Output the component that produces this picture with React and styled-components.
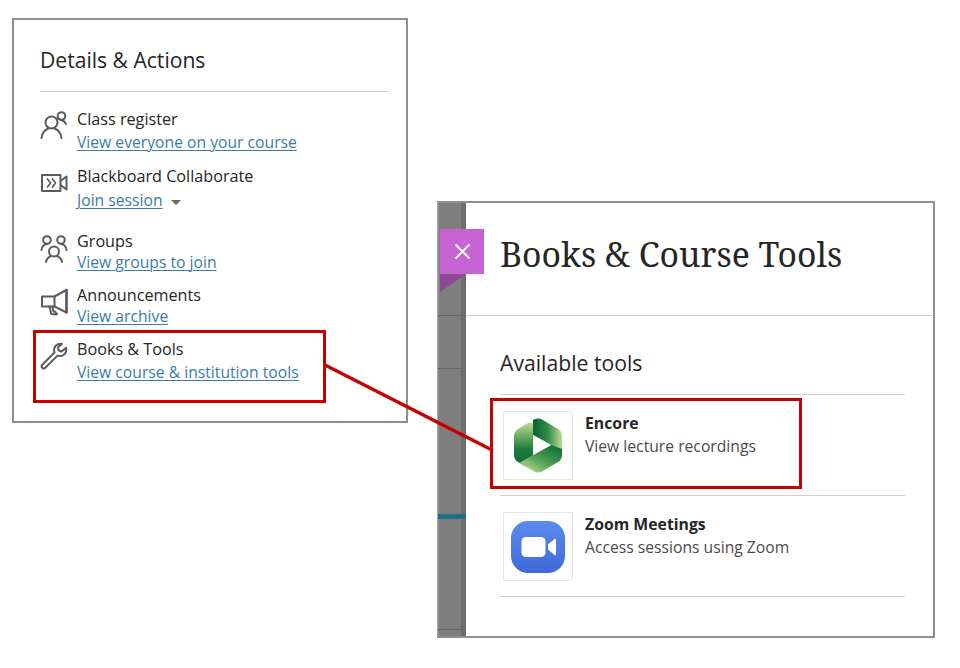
import React from "react";
import styled, { createGlobalStyle } from "styled-components";

const Global = createGlobalStyle`
  html, body { margin: 0; padding: 0; background: #fff; }
  body { font-family: "Open Sans", "Noto Sans", sans-serif; color: #262626; }
`;

const Page = styled.div`
  position: relative;
  width: 960px;
  height: 668px;
  overflow: hidden;
  display: flex;
  align-items: flex-start;
  padding: 18px 0 0 12px;
  box-sizing: border-box;
`;

const DetailsCard = styled.section`
  width: 396px;
  height: 405px;
  box-sizing: border-box;
  border: 2px solid #8f8f8f;
  padding: 25px 17px 0 26px;
  background: #fff;
  flex: none;
`;

const CardTitle = styled.h2`
  margin: 0;
  font-size: 21.1px;
  line-height: 30px;
  font-weight: 400;
  color: #262626;
  padding-bottom: 16px;
  border-bottom: 1px solid #cdcdcd;
`;

const RowList = styled.div`
  display: flex;
  flex-direction: column;
  padding-top: 15px;
`;

const Row = styled.div`
  position: relative;
  display: flex;
  align-items: flex-start;
  gap: 9px;
  height: ${(p) => p.$h}px;
`;

const RowIcon = styled.svg`
  width: 28px;
  height: 28px;
  flex: none;
  margin-top: ${(p) => p.$top}px;
  color: #5c5c5c;
`;

const RowText = styled.div`
  display: flex;
  flex-direction: column;
`;

const RowTitle = styled.div`
  font-size: 16.2px;
  line-height: 24px;
  color: #262626;
`;

const RowLink = styled.a`
  display: inline-block;
  font-size: 15.7px;
  line-height: ${(p) => p.$lh || 23}px;
  color: #3a7cab;
  text-decoration: underline;
  text-underline-offset: 2px;
  text-decoration-thickness: 1px;
`;

const Caret = styled.span`
  display: inline-block;
  width: 0;
  height: 0;
  margin-left: 8px;
  border-left: 5px solid transparent;
  border-right: 5px solid transparent;
  border-top: 5px solid #666;
  vertical-align: 1px;
`;

const Callout = styled.div`
  position: absolute;
  box-sizing: border-box;
  border: 3.5px solid #c80000;
  pointer-events: none;
`;

const RowCallout = styled(Callout)`
  left: -7px;
  top: -7px;
  width: 293px;
  height: 73px;
`;

const ToolsCard = styled.section`
  width: 498px;
  height: 437px;
  margin: 183px 0 0 29px;
  flex: none;
  box-sizing: border-box;
  border: 2px solid #8f8f8f;
  border-left: 1px solid #a8a8a8;
  display: flex;
  position: relative;
  background: #fff;
`;

const Backdrop = styled.div`
  position: relative;
  width: 28px;
  flex: none;
  background: linear-gradient(90deg, #8a8a8a 0, #7e7e7e 2px, #7e7e7e 23px, #6d6d6d 23px, #6d6d6d 28px);
`;

const BackdropRule = styled.div`
  position: absolute;
  left: 0;
  right: 0;
  top: ${(p) => p.$top}px;
  height: ${(p) => p.$h || 1}px;
  background: ${(p) => p.$color || "#666"};
`;

const CloseTile = styled.div`
  position: absolute;
  left: 2px;
  top: 26px;
  width: 44px;
  height: 45px;
  background: #c564d2;
  display: flex;
  align-items: center;
  justify-content: center;
`;

const Fold = styled.div`
  position: absolute;
  left: 2px;
  top: 71px;
  width: 0;
  height: 0;
  border-top: 18px solid #8d4995;
  border-right: 26px solid transparent;
`;

const Drawer = styled.div`
  flex: 1;
  display: flex;
  flex-direction: column;
  min-width: 0;
`;

const DrawerHeader = styled.header`
  height: 113px;
  box-sizing: border-box;
  padding: 28px 0 0 34px;
  border-bottom: 1px solid #cfcfcf;
`;

const DrawerTitle = styled.h1`
  margin: 0;
  font-family: "Noto Serif", "DejaVu Serif", serif;
  font-weight: 400;
  font-size: 33.8px;
  line-height: 46px;
  color: #262626;
`;

const DrawerBody = styled.div`
  padding: 30px 28px 0 34px;
`;

const SectionTitle = styled.h2`
  margin: 0;
  font-size: 21.2px;
  line-height: 33px;
  font-weight: 400;
  color: #262626;
  padding-bottom: 15px;
  border-bottom: 1px solid #cfcfcf;
`;

const ToolRow = styled.div`
  position: relative;
  border-bottom: 1px solid #cfcfcf;
  display: flex;
  align-items: flex-start;
  gap: 12px;
  padding: 16px 0 0 3px;
  height: 84px;
`;

const ToolTile = styled.div`
  width: 70px;
  height: 69px;
  box-sizing: border-box;
  border: 1px solid #e6e6e6;
  border-radius: 2px;
  display: flex;
  align-items: center;
  justify-content: center;
  flex: none;
`;

const ToolText = styled.div`
  display: flex;
  flex-direction: column;
  padding-top: 1px;
`;

const ToolName = styled.div`
  font-size: 15.8px;
  line-height: 22px;
  font-weight: 700;
  color: #262626;
`;

const ToolDesc = styled.div`
  font-size: 15.7px;
  line-height: 24px;
  color: #4a4a4a;
`;

const ToolCallout = styled(Callout)`
  left: -10px;
  top: 3px;
  width: 312px;
  height: 91px;
`;

const Connector = styled.svg`
  position: absolute;
  left: 0;
  top: 0;
  pointer-events: none;
`;

const stroke = {
  fill: "none",
  stroke: "currentColor",
  strokeWidth: 2,
  strokeLinecap: "round",
  strokeLinejoin: "round",
};

const PeopleIcon = () => (
  <RowIcon $top={4} viewBox="0 0 28 28" {...stroke}>
    <circle cx="11.5" cy="11.5" r="6" />
    <path d="M1.500 27c.5-5 3-8 7-9.500M21.500 27c-.5-5-3-8-7-9.500" />
    <circle cx="21.500" cy="5" r="3.800" />
    <path d="M17 7.500c.8.200 1.200.300 1.800.500M26 13c-.800-2-2.500-3.500-5-4" />
  </RowIcon>
);

const VideoIcon = () => (
  <RowIcon $top={5} viewBox="0 0 28 28" {...stroke}>
    <rect x="2" y="6" width="18.500" height="16" />
    <path d="M20.500 12l6-4.500v13l-6-4.500" />
    <path d="M7.500 10l3 4-3 4M12.500 10l3 4-3 4" strokeWidth="1.700" />
  </RowIcon>
);

const GroupsIcon = () => (
  <RowIcon $top={6} viewBox="0 0 28 28" {...stroke}>
    <circle cx="7" cy="5" r="3.800" />
    <circle cx="21" cy="5" r="3.800" />
    <circle cx="14" cy="16.500" r="5" />
    <path d="M1.500 15c.3-3 2-5.500 5.500-6M26.500 15c-.3-3-2-5.500-5.500-6" />
    <path d="M6 27c.5-3 2.500-5 5-6M22 27c-.5-3-2.500-5-5-6" />
  </RowIcon>
);

const MegaphoneIcon = () => (
  <RowIcon $top={5} viewBox="0 0 28 28" {...stroke}>
    <path d="M2 8.500h12.500v10H2z" />
    <path d="M14.500 8.500L26.500 2v22.500l-12-6" />
    <path d="M26.500 2v22.500" strokeWidth="2.400" />
    <path d="M9.500 18.500l1.500 6.500c.2.800.800 1.200 1.500 1.200h4.500l-2-2.500-1.500-.2-1-5" />
  </RowIcon>
);

const WrenchIcon = () => (
  <RowIcon $top={5} viewBox="0 0 28 28" {...stroke}>
    <path d="M20 1.800c-3.500.2-6 3-6 6.200 0 1 .2 1.800.5 2.500L2.300 22.700c-1 1-1 2.300-.1 3.100.9.900 2.200.9 3.100 0L17.500 13.600c.8.300 1.600.5 2.500.5 3.400 0 6.300-2.800 6.300-6.300 0-.7-.1-1.300-.3-1.900L21.500 9.500l-3-1.200-.5-3 3.800-3.300c-.6-.2-1.200-.2-1.800-.2z" />
  </RowIcon>
);

const CloseIcon = () => (
  <svg width="17" height="17" viewBox="0 0 17 17" fill="none" stroke="#fff" strokeWidth="2">
    <path d="M1.500 1.500l14 14M15.500 1.500l-14 14" />
  </svg>
);

const EncoreLogo = () => (
  <svg width="48" height="55" viewBox="0 0 48 55">
    <defs>
      <clipPath id="enHex">
        <path d="M20 1.500Q24-.5 28 1.500L44 11Q48 13.500 48 18V37Q48 41.500 44 44L28 53.500Q24 55.500 20 53.500L4 44Q0 41.500 0 37V18Q0 13.500 4 11z" />
      </clipPath>
      <linearGradient id="enTop" x1="0.150" y1="0" x2="1" y2="0">
        <stop offset="0" stopColor="#0c6a35" />
        <stop offset="0.45" stopColor="#2f8a47" />
        <stop offset="1" stopColor="#bcdb90" />
      </linearGradient>
      <linearGradient id="enLeft" x1="0" y1="0" x2="0" y2="1">
        <stop offset="0" stopColor="#bcdb90" />
        <stop offset="0.6" stopColor="#1f7c3d" />
        <stop offset="1" stopColor="#0c6a35" />
      </linearGradient>
      <linearGradient id="enBottom" x1="1" y1="0.100" x2="0.200" y2="1">
        <stop offset="0" stopColor="#0c6a35" />
        <stop offset="0.5" stopColor="#4f9e55" />
        <stop offset="1" stopColor="#c4e09a" />
      </linearGradient>
    </defs>
    <g clipPath="url(#enHex)">
      <path d="M0 5H19V48H0z" fill="url(#enLeft)" />
      <path d="M19 37L37 27H48V55H0V48z" fill="url(#enBottom)" />
      <path d="M17 0H48V31L37 27 19 17V3z" fill="url(#enTop)" />
    </g>
    <path d="M19 17L37 27 19 37z" fill="#fff" />
  </svg>
);

const ZoomLogo = () => (
  <svg width="54" height="52" viewBox="0 0 54 52">
    <defs>
      <linearGradient id="zm" x1="0" y1="0" x2="0" y2="1">
        <stop offset="0" stopColor="#5b8bee" />
        <stop offset="1" stopColor="#3f6ad8" />
      </linearGradient>
    </defs>
    <rect x="0" y="0" width="54" height="52" rx="17" fill="url(#zm)" />
    <rect x="10.500" y="16" width="24" height="20" rx="4.500" fill="#fff" />
    <path d="M37 23.500l6.500-5.500c.8-.7 1.500-.3 1.500.8v14.400c0 1.100-.7 1.500-1.500.8L37 28.500z" fill="#fff" />
  </svg>
);

export default function App() {
  return (
    <>
      <Global />
      <Page>
        <DetailsCard>
          <CardTitle>Details &amp; Actions</CardTitle>
          <RowList>
            <Row $h={57}>
              <PeopleIcon />
              <RowText>
                <RowTitle>Class register</RowTitle>
                <RowLink>View everyone on your course</RowLink>
              </RowText>
            </Row>
            <Row $h={65}>
              <VideoIcon />
              <RowText>
                <RowTitle>Blackboard Collaborate</RowTitle>
                <div>
                  <RowLink $lh={24}>Join session</RowLink>
                  <Caret />
                </div>
              </RowText>
            </Row>
            <Row $h={54}>
              <GroupsIcon />
              <RowText>
                <RowTitle>Groups</RowTitle>
                <RowLink $lh={18}>View groups to join</RowLink>
              </RowText>
            </Row>
            <Row $h={54}>
              <MegaphoneIcon />
              <RowText>
                <RowTitle>Announcements</RowTitle>
                <RowLink $lh={18}>View archive</RowLink>
              </RowText>
            </Row>
            <Row $h={60}>
              <WrenchIcon />
              <RowText>
                <RowTitle>Books &amp; Tools</RowTitle>
                <RowLink>View course &amp; institution tools</RowLink>
              </RowText>
              <RowCallout />
            </Row>
          </RowList>
        </DetailsCard>

        <ToolsCard>
          <Backdrop>
            <BackdropRule $top={112} />
            <BackdropRule $top={165} />
            <BackdropRule $top={311} $h={5} $color="#1f6f87" />
            <BackdropRule $top={426} />
            <Fold />
            <CloseTile>
              <CloseIcon />
            </CloseTile>
          </Backdrop>
          <Drawer>
            <DrawerHeader>
              <DrawerTitle>Books &amp; Course Tools</DrawerTitle>
            </DrawerHeader>
            <DrawerBody>
              <SectionTitle>Available tools</SectionTitle>
              <ToolRow>
                <ToolTile>
                  <EncoreLogo />
                </ToolTile>
                <ToolText>
                  <ToolName>Encore</ToolName>
                  <ToolDesc>View lecture recordings</ToolDesc>
                </ToolText>
                <ToolCallout />
              </ToolRow>
              <ToolRow>
                <ToolTile>
                  <ZoomLogo />
                </ToolTile>
                <ToolText>
                  <ToolName>Zoom Meetings</ToolName>
                  <ToolDesc>Access sessions using Zoom</ToolDesc>
                </ToolText>
              </ToolRow>
            </DrawerBody>
          </Drawer>
        </ToolsCard>

        <Connector width="960" height="668" viewBox="0 0 960 668">
          <line x1="325" y1="365" x2="492" y2="450" stroke="#c80000" strokeWidth="3.500" />
        </Connector>
      </Page>
    </>
  );
}
